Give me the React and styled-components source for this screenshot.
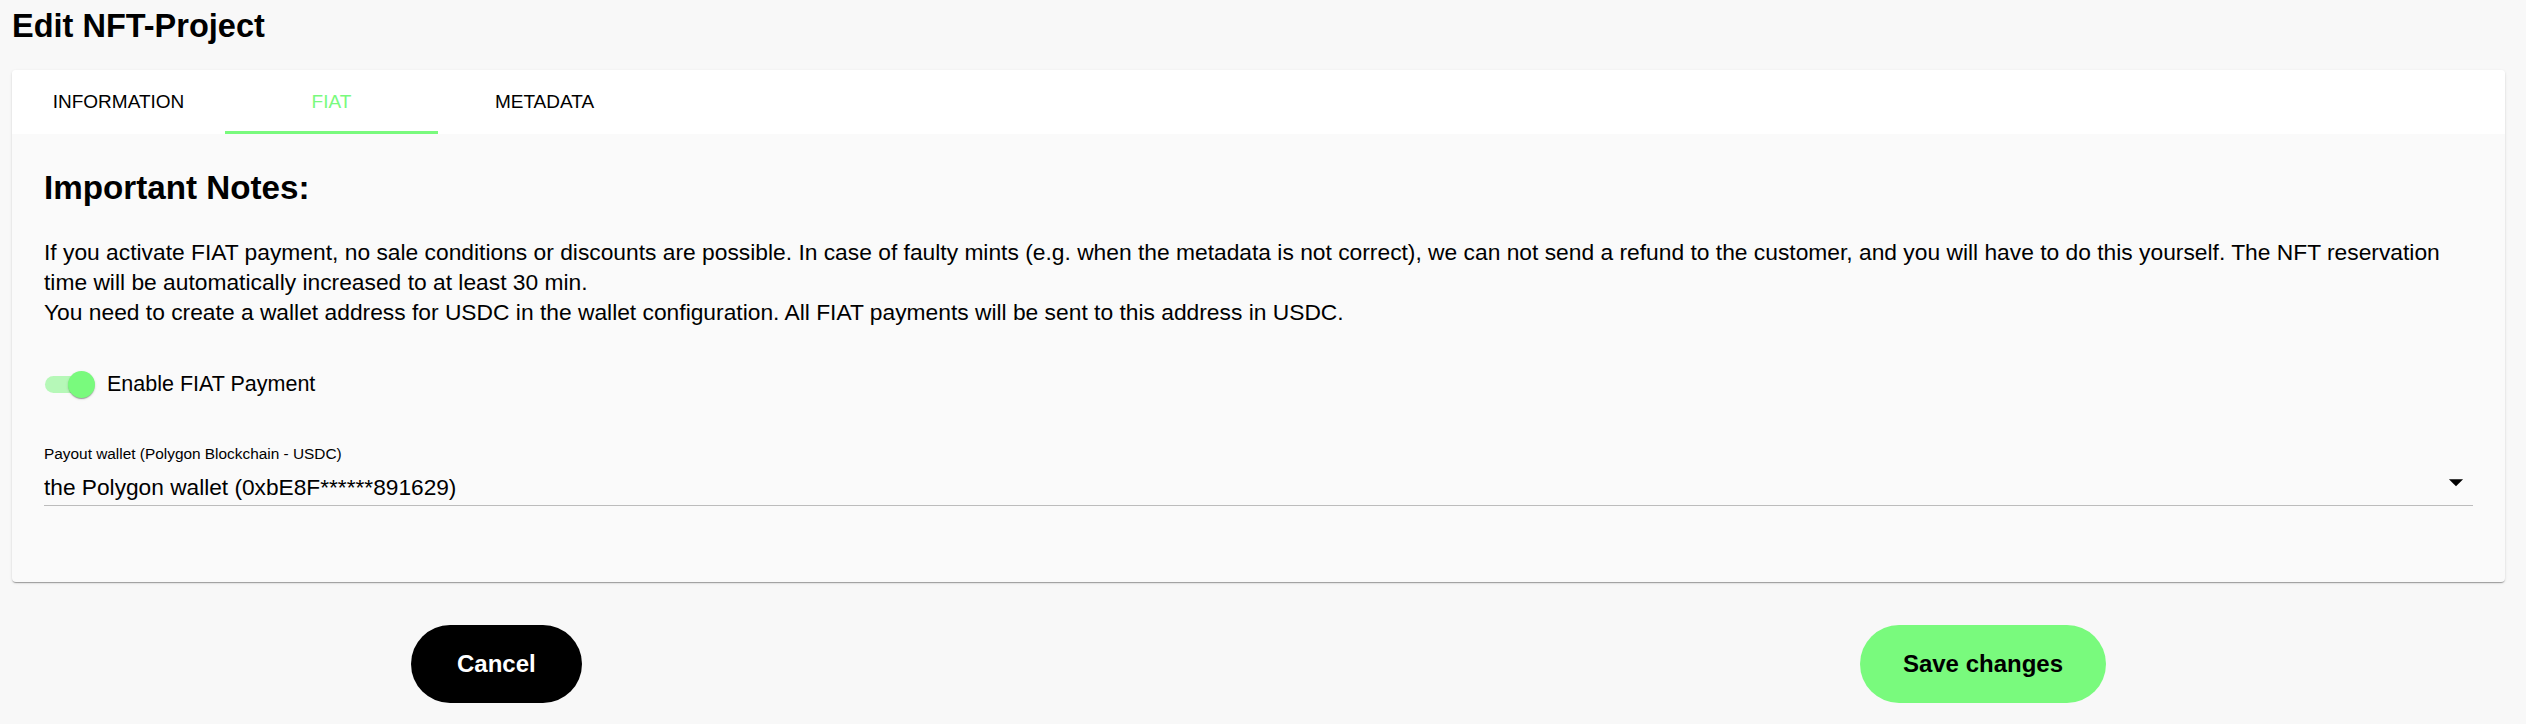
import styled, { createGlobalStyle } from 'styled-components';

const GREEN = '#79fa7d';

const GlobalStyle = createGlobalStyle`
  html, body {
    margin: 0;
    padding: 0;
    background: #f8f8f8;
  }
  body {
    font-family: "Liberation Sans", Arial, sans-serif;
    color: #000;
  }
`;

const Page = styled.div`
  padding: 8px 21px 0 12px;
  min-height: 724px;
  box-sizing: border-box;
`;

const Title = styled.h1`
  margin: 0 0 26px;
  font-size: 32.5px;
  line-height: 36px;
  font-weight: 700;
`;

const Card = styled.section`
  background: #fafafa;
  border-radius: 4px;
  overflow: hidden;
  box-shadow: 0 2px 1px -1px rgba(0, 0, 0, 0.2), 0 1px 1px 0 rgba(0, 0, 0, 0.14),
    0 1px 3px 0 rgba(0, 0, 0, 0.12);
`;

const TabBar = styled.nav`
  display: flex;
  height: 64px;
  background: #fff;
`;

const Tab = styled.button`
  position: relative;
  width: 213px;
  border: 0;
  background: transparent;
  font-family: inherit;
  font-size: 19px;
  text-transform: uppercase;
  color: ${(p) => (p.$active ? GREEN : '#000')};
  cursor: pointer;

  &::after {
    content: '';
    position: absolute;
    left: 0;
    right: 0;
    bottom: 0;
    height: 3px;
    background: ${(p) => (p.$active ? GREEN : 'transparent')};
  }
`;

const Content = styled.div`
  padding: 35px 32px 76px;
`;

const Heading = styled.h2`
  margin: 0 0 30px;
  font-size: 33.2px;
  line-height: 38px;
  font-weight: 700;
`;

const Note = styled.p`
  margin: 0;
  font-size: 22.8px;
  line-height: 30px;
`;

const ToggleRow = styled.label`
  display: flex;
  align-items: center;
  gap: 12px;
  height: 40px;
  margin: 37px 0 41px 1px;
  font-size: 21.5px;
  cursor: pointer;
`;

const SwitchRoot = styled.span`
  position: relative;
  width: 50px;
  height: 27px;
  flex-shrink: 0;
`;

const Track = styled.span`
  position: absolute;
  left: 0;
  top: 5px;
  width: 47px;
  height: 17px;
  border-radius: 9px;
  background: ${(p) => (p.$on ? '#b6f8b8' : '#c4c4c4')};
`;

const Thumb = styled.span`
  position: absolute;
  top: 0;
  ${(p) => (p.$on ? 'right: 0;' : 'left: 0;')}
  width: 27px;
  height: 27px;
  border-radius: 50%;
  background: ${(p) => (p.$on ? GREEN : '#fff')};
  box-shadow: 0 2px 1px -1px rgba(0, 0, 0, 0.2), 0 1px 1px 0 rgba(0, 0, 0, 0.14),
    0 1px 3px 0 rgba(0, 0, 0, 0.12);
`;

const FieldLabel = styled.div`
  font-size: 15.4px;
  line-height: 18px;
  margin-bottom: 11px;
`;

const Select = styled.div`
  display: flex;
  align-items: center;
  justify-content: space-between;
  font-size: 22.7px;
  line-height: 26px;
  padding-bottom: 5px;
  border-bottom: 1px solid #bcbcbc;
`;

const Arrow = styled.svg`
  width: 34px;
  height: 34px;
  margin-top: -10px;
`;

const Actions = styled.div`
  display: flex;
  justify-content: space-between;
  max-width: 1695px;
  margin: 43px auto 0;
`;

const Button = styled.button`
  height: 78px;
  padding: 0 ${(p) => p.$pad}px;
  border: 0;
  border-radius: 39px;
  font-family: inherit;
  font-size: 24px;
  font-weight: 700;
  background: ${(p) => (p.$primary ? GREEN : '#000')};
  color: ${(p) => (p.$primary ? '#000' : '#fff')};
  cursor: pointer;
`;

export default function App() {
  return (
    <>
      <GlobalStyle />
      <Page>
        <Title>Edit NFT-Project</Title>
        <Card>
          <TabBar>
            <Tab>Information</Tab>
            <Tab $active>FIAT</Tab>
            <Tab>Metadata</Tab>
          </TabBar>
          <Content>
            <Heading>Important Notes:</Heading>
            <Note>
              If you activate FIAT payment, no sale conditions or discounts are possible. In case of
              faulty mints (e.g. when the metadata is not correct), we can not send a refund to the
              customer, and you will have to do this yourself. The NFT reservation
              <br />
              time will be automatically increased to at least 30 min.
            </Note>
            <Note>
              You need to create a wallet address for USDC in the wallet configuration. All FIAT
              payments will be sent to this address in USDC.
            </Note>
            <ToggleRow>
              <SwitchRoot>
                <Track $on />
                <Thumb $on />
              </SwitchRoot>
              Enable FIAT Payment
            </ToggleRow>
            <FieldLabel>Payout wallet (Polygon Blockchain - USDC)</FieldLabel>
            <Select>
              <span>the Polygon wallet (0xbE8F******891629)</span>
              <Arrow viewBox="0 0 24 24">
                <path d="M7 10l5 5 5-5z" fill="#000" />
              </Arrow>
            </Select>
          </Content>
        </Card>
        <Actions>
          <Button $pad={46}>Cancel</Button>
          <Button $primary $pad={43}>
            Save changes
          </Button>
        </Actions>
      </Page>
    </>
  );
}
